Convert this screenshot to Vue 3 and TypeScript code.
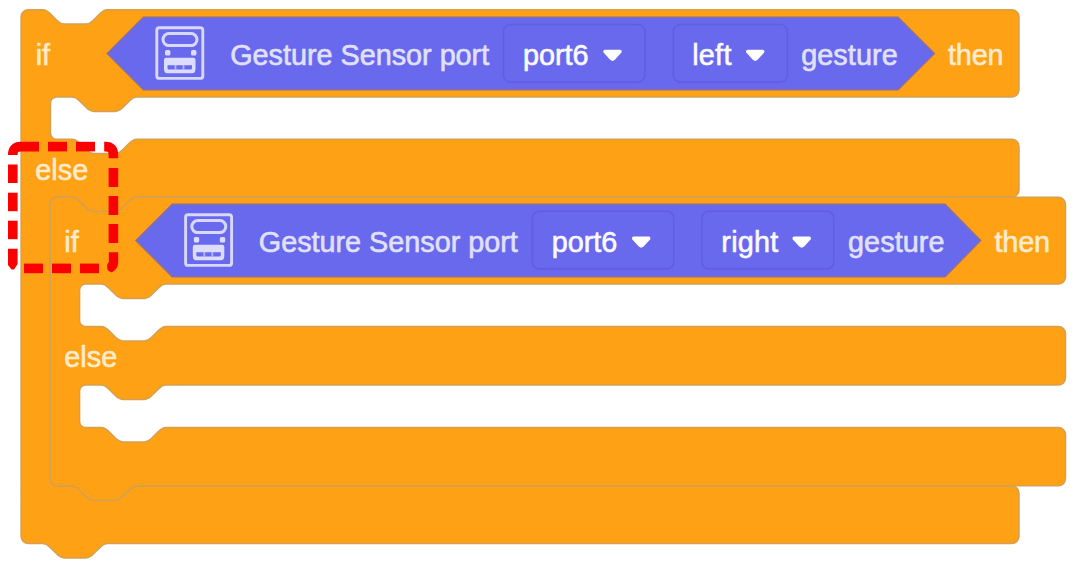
<script setup lang="ts">
interface Label { x: number; y: number; text: string; width: number; kind: 'control' | 'sensor' | 'value' }
interface Menu { x: number; y: number; width: number; arrow: number }

// Block geometry unit: one grid step of the block grammar
const U = 1.8
const n = (v: number): number => Math.round(v * U * 100) / 100

const notchRight = `c${n(2)} 0 ${n(3)} ${n(1)} ${n(4)} ${n(2)} l${n(4)} ${n(4)} c${n(1)} ${n(1)} ${n(2)} ${n(2)} ${n(4)} ${n(2)} h${n(12)} c${n(2)} 0 ${n(3)} ${n(-1)} ${n(4)} ${n(-2)} l${n(4)} ${n(-4)} c${n(1)} ${n(-1)} ${n(2)} ${n(-2)} ${n(4)} ${n(-2)}`
const notchLeft = `c${n(-2)} 0 ${n(-3)} ${n(1)} ${n(-4)} ${n(2)} l${n(-4)} ${n(4)} c${n(-1)} ${n(1)} ${n(-2)} ${n(2)} ${n(-4)} ${n(2)} h${n(-12)} c${n(-2)} 0 ${n(-3)} ${n(-1)} ${n(-4)} ${n(-2)} l${n(-4)} ${n(-4)} c${n(-1)} ${n(-1)} ${n(-2)} ${n(-2)} ${n(-4)} ${n(-2)}`
const R = n(4)

// rows: [top, bottom] of each full-width bar of an if/else block
function blockPath(left: number, right: number, rows: [number, number][]): string {
  const inner = left + 29.4
  let d = `M${left} ${rows[0][0] + R} a${R} ${R} 0 0 1 ${R} ${-R} H${left + n(12)} ${notchRight}`
  rows.forEach(([, bottom], i) => {
    d += ` H${right - R} a${R} ${R} 0 0 1 ${R} ${R} V${bottom - R} a${R} ${R} 0 0 1 ${-R} ${R}`
    if (i < rows.length - 1) {
      const next = rows[i + 1][0]
      d += ` H${inner + n(48)} ${notchLeft} H${inner + 6} a6 6 0 0 0 -6 6 V${next - 6} a6 6 0 0 0 6 6 H${inner + n(12)} ${notchRight}`
    }
  })
  return d + ` H${left + n(48)} ${notchLeft} H${left + R} a${R} ${R} 0 0 1 ${-R} ${-R} Z`
}

const outer = blockPath(21.1, 1019, [[9.7, 97], [139.2, 197], [486, 543.5]])
const nested = blockPath(50.2, 1065.5, [[197.2, 284], [326.5, 385], [427.5, 485.8]])

const labels: Label[] = [
  { x: 35.7, y: 64.8, text: 'if', width: 14.4, kind: 'control' },
  { x: 230.2, y: 64.8, text: 'Gesture Sensor port', width: 259, kind: 'sensor' },
  { x: 523, y: 64.8, text: 'port6', width: 65.5, kind: 'value' },
  { x: 692.2, y: 64.8, text: 'left', width: 39.2, kind: 'value' },
  { x: 801.2, y: 64.8, text: 'gesture', width: 96.5, kind: 'sensor' },
  { x: 948, y: 64.8, text: 'then', width: 55.6, kind: 'control' },
  { x: 35.2, y: 179.7, text: 'else', width: 53, kind: 'control' },
  { x: 64.3, y: 251.6, text: 'if', width: 14.4, kind: 'control' },
  { x: 258.8, y: 251.6, text: 'Gesture Sensor port', width: 259, kind: 'sensor' },
  { x: 551.8, y: 251.6, text: 'port6', width: 65.5, kind: 'value' },
  { x: 721.3, y: 251.6, text: 'right', width: 57, kind: 'value' },
  { x: 848, y: 251.6, text: 'gesture', width: 96.5, kind: 'sensor' },
  { x: 994.5, y: 251.6, text: 'then', width: 55.6, kind: 'control' },
  { x: 64.3, y: 367.4, text: 'else', width: 53, kind: 'control' },
]

const menus: Menu[] = [
  { x: 503.5, y: 24.5, width: 141.5, arrow: 612.5 },
  { x: 673.3, y: 24.5, width: 114, arrow: 755.2 },
  { x: 532.3, y: 211.3, width: 141.5, arrow: 641.2 },
  { x: 701.8, y: 211.3, width: 132, arrow: 801.7 },
]

const icons = [{ x: 155, y: 26 }, { x: 183.8, y: 213 }]

const dashes: string[] = [
  'M12.8 155 V154.5 Q12.8 146.6 20.8 146.6 H39',
  'M48 146.6 H67',
  'M76 146.6 H95',
  'M104.2 146.6 H105.5 Q113.4 146.6 113.4 154.5 V158.3',
  'M113.4 168 V187',
  'M113.4 196 V215',
  'M113.4 224 V243',
  'M99 268.4 H80',
  'M71 268.4 H52',
  'M43 268.4 H24',
  'M12.8 239.2 V220.7',
  'M12.8 211.2 V192.7',
  'M12.8 183 V164.5',
]
</script>

<template>
  <main class="workspace">
    <svg class="blocks" width="1077" height="567" viewBox="0 0 1077 567">
      <path class="control-block" :d="outer" />
      <path class="control-block" :d="nested" />
      <path class="sensor-block" d="M107.3 53.5 L143.5 17.2 H898 L934.3 53.5 L898 89.8 H143.5 Z" />
      <path class="sensor-block" d="M136 240.5 L172.3 204.2 H945 L980.5 240.5 L945 276.8 H172.3 Z" />

      <g v-for="(m, i) in menus" :key="'m' + i">
        <rect class="menu" :x="m.x" :y="m.y" :width="m.width" height="57.6" rx="7" />
        <path class="arrow" :transform="`translate(${m.arrow} ${m.y + 25.3})`" d="M-7.4 0 H7.4 Q10 0.4 8.9 2.8 L2.4 10 Q0 12.2 -2.4 10 L-8.9 2.8 Q-10 0.4 -7.4 0 Z" />
      </g>

      <g v-for="(p, i) in icons" :key="'i' + i" class="icon" :transform="`translate(${p.x} ${p.y})`">
        <rect x="1.8" y="1.8" width="46" height="50.6" rx="2.5" stroke-width="2.9" />
        <rect x="8" y="7.6" width="34" height="12" rx="6" stroke-width="3" />
        <rect class="solid" x="10" y="24" width="5.4" height="5.4" rx="1.5" />
        <rect class="solid" x="36" y="24" width="5.4" height="5.4" rx="1.5" />
        <path class="solid" fill-rule="evenodd" d="M11 31.8 H38.5 Q40.5 31.8 40.5 34 V43 Q40.5 47.2 37 47.2 H12.5 Q9 47.2 9 43 V34 Q9 31.8 11 31.8 Z M12.5 39.2 V42 Q12.5 43.6 14 43.6 H35.5 Q37 43.6 37 42 V39.2 Z" />
        <path class="ports" d="M20.5 39 V44 M28.5 39 V44" />
      </g>

      <text
        v-for="(l, i) in labels"
        :key="'t' + i"
        :class="['label', l.kind]"
        :x="l.x"
        :y="l.y"
        :textLength="l.width"
      >{{ l.text }}</text>

      <path v-for="(d, i) in dashes" :key="'d' + i" class="dash" :d="d" />
      <path class="dash-end" d="M8 248.8 H17.6 V264 L14 269.5 H11.5 L8 265 Z" />
      <path class="dash-end" d="M108.8 252.3 H118.2 V262 Q118.2 269 112 272.2 Q109.5 273 107.2 269 V264.5 L108.8 262 Z" />
    </svg>
  </main>
</template>

<style scoped>
.workspace {
  width: 1077px;
  height: 567px;
  overflow: hidden;
  background: #fff;
}
.blocks { display: block; }
.control-block { fill: #ffa114; stroke: #d5a050; stroke-width: 1.5; }
.sensor-block { fill: #6969ed; stroke: #8a6f9a; stroke-width: 1.5; }
.menu { fill: none; stroke: #5f5fdf; stroke-width: 1.6; }
.arrow { fill: #fff; }
.icon { fill: none; stroke: #d8d8fd; }
.icon .solid { fill: #dcdcff; stroke: none; }
.icon .ports { stroke: #b4b4f7; stroke-width: 1.8; }
.label {
  font-family: "Liberation Sans", Arial, sans-serif;
  font-size: 28.8px;
  stroke-width: 0.6;
  stroke-linejoin: round;
}
.control { fill: #ffebcd; stroke: #ffebcd; }
.sensor { fill: #e1e1fb; stroke: #e1e1fb; }
.value { fill: #fafaff; stroke: #fafaff; }
.dash { fill: none; stroke: #fb0000; stroke-width: 9.6; }
.dash-end { fill: #fb0000; }
</style>

<style>
body { background: #fff; }
</style>
